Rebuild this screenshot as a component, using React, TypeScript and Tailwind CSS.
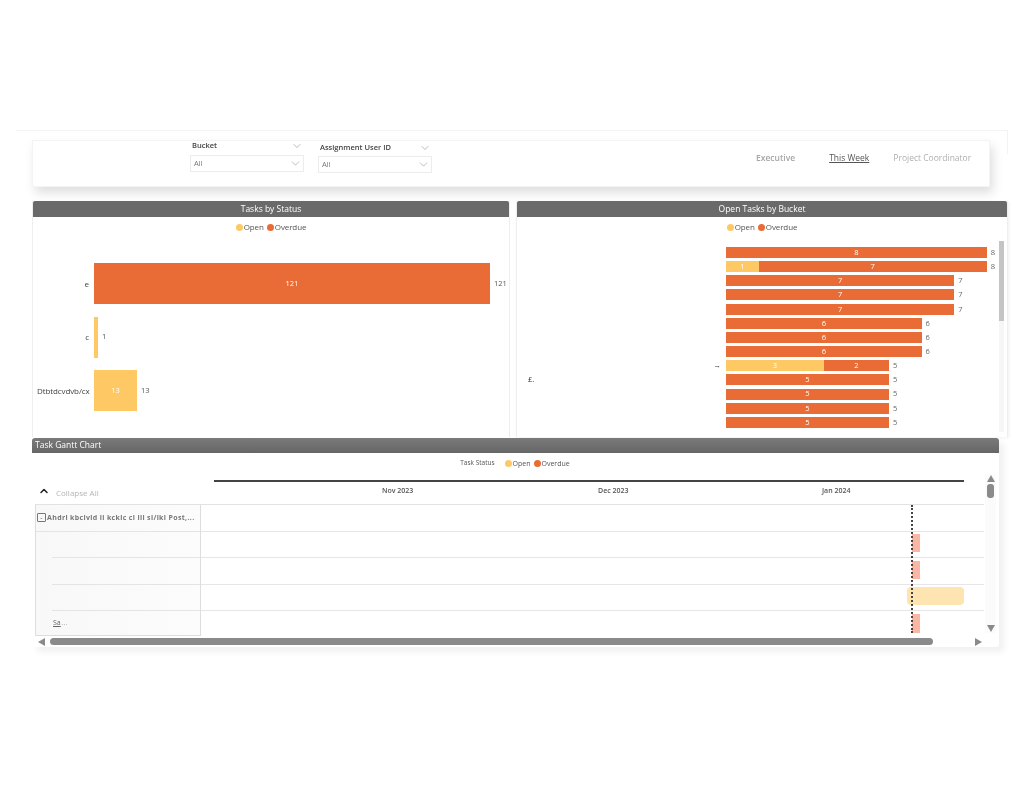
import { ChevronDown, ChevronUp } from "lucide-react";

const OPEN = "#fec965";
const OVERDUE = "#e96b36";

const bucketRows = [
  { open: 0, overdue: 8 },
  { open: 1, overdue: 7 },
  { open: 0, overdue: 7 },
  { open: 0, overdue: 7 },
  { open: 0, overdue: 7 },
  { open: 0, overdue: 6 },
  { open: 0, overdue: 6 },
  { open: 0, overdue: 6 },
  { open: 3, overdue: 2, label: "→" },
  { open: 0, overdue: 5, far: "£." },
  { open: 0, overdue: 5 },
  { open: 0, overdue: 5 },
  { open: 0, overdue: 5 },
];

function Legend({ className, small }: { className?: string; small?: boolean }) {
  return (
    <div className={`flex items-center justify-center leading-none text-[#555555] ${small ? "text-[7px]" : "text-[8px] tracking-[-0.1px]"} ${className ?? ""}`}>
      <span className="mr-[1px] h-[7px] w-[7px] rounded-full bg-[#fec965]" />
      <span className="mr-[3px]">Open</span>
      <span className="mr-[1px] h-[7px] w-[7px] rounded-full bg-[#e96b36]" />
      <span>Overdue</span>
    </div>
  );
}

function Slicer({ title, className, tight }: { title: string; className?: string; tight?: boolean }) {
  return (
    <div className={`w-[114px] ${className ?? ""}`}>
      <div className="-mt-[1px] flex h-[12px] items-center justify-between pl-[2px] pr-[1px] text-[7.5px] font-semibold text-[#444444]">
        <span>{title}</span>
        <ChevronDown size={12} strokeWidth={1} className="text-[#777777]" />
      </div>
      <div className={`flex h-[17px] items-center justify-between border border-[#ececec] pl-[3px] pr-[1px] text-[7.5px] text-[#777777] ${tight ? "mt-[2px]" : "mt-[3px]"}`}>
        <span>All</span>
        <ChevronDown size={13} strokeWidth={1} className="text-[#888888]" />
      </div>
    </div>
  );
}

function StatusRow({ label, width, color, value, inside }: { label: string; width: number; color: string; value: number; inside: boolean }) {
  return (
    <div className="flex h-[41px] items-center">
      <div className="w-[57px] shrink-0 pr-[5px] text-right text-[8px] tracking-[-0.1px] whitespace-nowrap text-[#444444]">{label}</div>
      <div className="flex h-full shrink-0 items-center justify-center text-[7.5px] text-white" style={{ width, background: color }}>
        {inside ? value : ""}
      </div>
      <div className="ml-[4px] text-[7.5px] text-[#555555]">{value}</div>
    </div>
  );
}

function Arrow({ dir, className }: { dir: "up" | "down" | "left" | "right"; className?: string }) {
  const points = {
    up: "4,0 8,7 0,7",
    down: "0,0 8,0 4,7",
    left: "7,0 7,8 0,4",
    right: "0,0 7,4 0,8",
  }[dir];
  return (
    <svg width="8" height="8" viewBox="0 0 8 8" className={className}>
      <polygon points={points} fill="#8a8a8a" />
    </svg>
  );
}

function GanttRow({ label, children, full }: { label?: React.ReactNode; children?: React.ReactNode; full?: boolean }) {
  return (
    <div className="flex h-[26.5px]">
      <div className="flex w-[166px] shrink-0 flex-col border-x border-[#dddddd] bg-gradient-to-r from-[#f8f8f8] to-[#fcfcfc] text-[7px]">
        <div className="flex flex-1 items-center">{label}</div>
        <div className={`border-b border-[#e4e4e4] ${full ? "" : "ml-[16px]"}`} />
      </div>
      <div className="flex flex-1 items-center border-b border-[#e6e6e6]">{children}</div>
    </div>
  );
}

export default function App() {
  return (
    <div className="h-[791px] w-[1024px] overflow-hidden bg-white px-[16px] pt-[130px] font-['Open_Sans',sans-serif] blur-[0.3px]">
      <div className="h-[24px] w-[992px] border-t border-r border-[#f3f3f3]" />

      <div className="-mt-[14px] pl-[16px]">
        {/* filter bar */}
        <div className="flex h-[47px] w-[958px] border border-[#f4f4f4] bg-white shadow-[3px_6px_10px_rgba(0,0,0,0.13)]">
          <Slicer title="Bucket" className="ml-[157px]" />
          <Slicer title="Assignment User ID" className="ml-[14px] mt-[2px]" tight />
          <div className="ml-[324px] flex h-[35px] items-center text-[8.5px]">
            <span className="font-semibold text-[#a6a6a6]">Executive</span>
            <span className="ml-[34px] font-medium text-[#555555] underline">This Week</span>
            <span className="ml-[24px] text-[#b0b0b0]">Project Coordinator</span>
          </div>
        </div>

        <div className="mt-[14px] flex gap-[6px]">
          {/* tasks by status */}
          <div className="h-[236px] w-[478px] border-x border-[#eeeeee] bg-white">
            <div className="flex h-[16px] items-center justify-center rounded-t-[2px] bg-[#6a6a6a] text-[8.5px] font-medium text-white">
              Tasks by Status
            </div>
            <Legend className="mt-[6px]" />
            <div className="mt-[32px] flex flex-col gap-[12.5px] pl-[4px]">
              <StatusRow label="e" width={396} color={OVERDUE} value={121} inside />
              <StatusRow label="c" width={4} color={OPEN} value={1} inside={false} />
              <StatusRow label="Dtbtdcvdvb/cx" width={43} color={OPEN} value={13} inside />
            </div>
          </div>

          {/* open tasks by bucket */}
          <div className="h-[236px] w-[492px] border-x border-[#eeeeee] bg-white shadow-[1px_1px_3px_rgba(0,0,0,0.06)]">
            <div className="flex h-[16px] items-center justify-center rounded-t-[2px] bg-[#6a6a6a] text-[8.5px] font-medium text-white">
              Open Tasks by Bucket
            </div>
            <Legend className="mt-[6px]" />
            <div className="flex">
              <div className="mt-[16px] flex w-[484px] flex-col gap-[3.17px]">
                {bucketRows.map((row, i) => (
                  <div key={i} className="flex h-[11px] items-center text-[7.5px] text-white">
                    <div className="flex w-[209px] justify-between pl-[11px] pr-[5px] text-[#333333]">
                      <span>{row.far ?? ""}</span>
                      <span>{row.label ?? ""}</span>
                    </div>
                    {row.open > 0 && (
                      <div className="flex h-full items-center justify-center bg-[#fec965]" style={{ width: row.open * 32.6 }}>
                        {row.open}
                      </div>
                    )}
                    <div className="flex h-full items-center justify-center bg-[#e96b36]" style={{ width: row.overdue * 32.6 }}>
                      {row.overdue}
                    </div>
                    <div className="ml-[4px] text-[#666666]">{row.open + row.overdue}</div>
                  </div>
                ))}
              </div>
              <div className="ml-[-2px] mt-[10px] h-[191px] w-[5px] bg-[#f6f6f6]">
                <div className="h-[80px] bg-[#c4c4c4]" />
              </div>
            </div>
          </div>
        </div>

        {/* gantt */}
        <div className="relative mt-[1px] h-[209px] w-[967px] rounded-b-[2px] bg-white shadow-[5px_5px_6px_rgba(0,0,0,0.06)]">
          <div className="flex h-[15px] items-center rounded-t-[3px] bg-gradient-to-b from-[#7a7a7a] to-[#666666] pl-[3px] text-[8.5px] font-medium text-white">
            Task Gantt Chart
          </div>
          <div className="mt-[7px] flex items-center justify-center pr-[1px] text-[6.5px] leading-none text-[#555555]">
            <span className="mr-[10px] font-medium">Task Status</span>
            <Legend small />
          </div>

          <div className="flex h-[36px]">
            <div className="flex w-[182px] shrink-0 items-end pb-[6px] pl-[6px]">
              <ChevronUp size={12} strokeWidth={3} className="text-[#222222]" />
              <span className="ml-[6px] text-[8px] leading-none text-[#b5b5b5]">Collapse All</span>
            </div>
            <div className="mt-[13px] w-[750px]">
              <div className="h-[1.5px] bg-[#444444]" />
              <div className="relative mt-[5px] text-[7px] font-semibold leading-none text-[#555555]">
                <span className="absolute left-[168px]">Nov 2023</span>
                <span className="absolute left-[384px]">Dec 2023</span>
                <span className="absolute left-[608px]">Jan 2024</span>
              </div>
            </div>
          </div>

          <div className="ml-[3px] mt-[1px] w-[949px] border-t border-[#e2e2e2]">
            <GanttRow
              full
              label={
                <>
                  <span className="ml-[1px] mr-[1px] flex h-[9px] w-[9px] shrink-0 items-center justify-center rounded-[1px] border border-[#777777] text-[7px] leading-none text-[#555555]">-</span>
                  <span className="truncate font-bold tracking-[0.35px] text-[#777777]">Ahdrl kbcivld li kcklc cl lil sl/lkl Post,...</span>
                </>
              }
            />
            <GanttRow>
              <div className="mb-[2px] ml-[711px] h-[18px] w-[8px] bg-[#fab6a4]" />
            </GanttRow>
            <GanttRow>
              <div className="mb-[2px] ml-[711px] h-[18px] w-[8px] bg-[#fab6a4]" />
            </GanttRow>
            <GanttRow>
              <div className="mb-[2px] ml-[706px] h-[18px] w-[57px] rounded-[4px] bg-[#fde4b0]" />
            </GanttRow>
            <div className="flex h-[25px]">
              <div className="flex w-[166px] shrink-0 items-center border-x border-b border-[#dddddd] bg-gradient-to-r from-[#f8f8f8] to-[#fcfcfc] pl-[17px] text-[7px] text-[#666666]">
                <span className="underline">Sa</span>
                <span className="ml-[1px] text-[#aaaaaa]">...</span>
              </div>
              <div className="flex flex-1 items-center">
                <div className="ml-[711px] h-[19px] w-[8px] bg-[#fab6a4]" />
              </div>
            </div>
          </div>

          {/* today marker */}
          <div className="absolute left-[879px] top-[67px] h-[128px] border-l-2 border-dotted border-[#444444]" />

          {/* vertical scrollbar */}
          <div className="absolute right-[3px] top-[36px] flex h-[159px] w-[11px] flex-col items-center bg-[#fbfbfb] pt-[1px]">
            <Arrow dir="up" />
            <div className="mt-[1px] h-[14px] w-[7px] rounded-[3px] bg-[#8a8a8a]" />
            <div className="flex-1" />
            <Arrow dir="down" />
          </div>

          {/* horizontal scrollbar */}
          <div className="absolute bottom-[1px] left-[6px] flex h-[9px] w-[945px] items-center">
            <Arrow dir="left" />
            <div className="ml-[4px] h-[7px] w-[883px] rounded-[4px] bg-[#8a8a8a]" />
            <div className="flex-1" />
            <Arrow dir="right" />
          </div>
        </div>
      </div>
    </div>
  );
}
